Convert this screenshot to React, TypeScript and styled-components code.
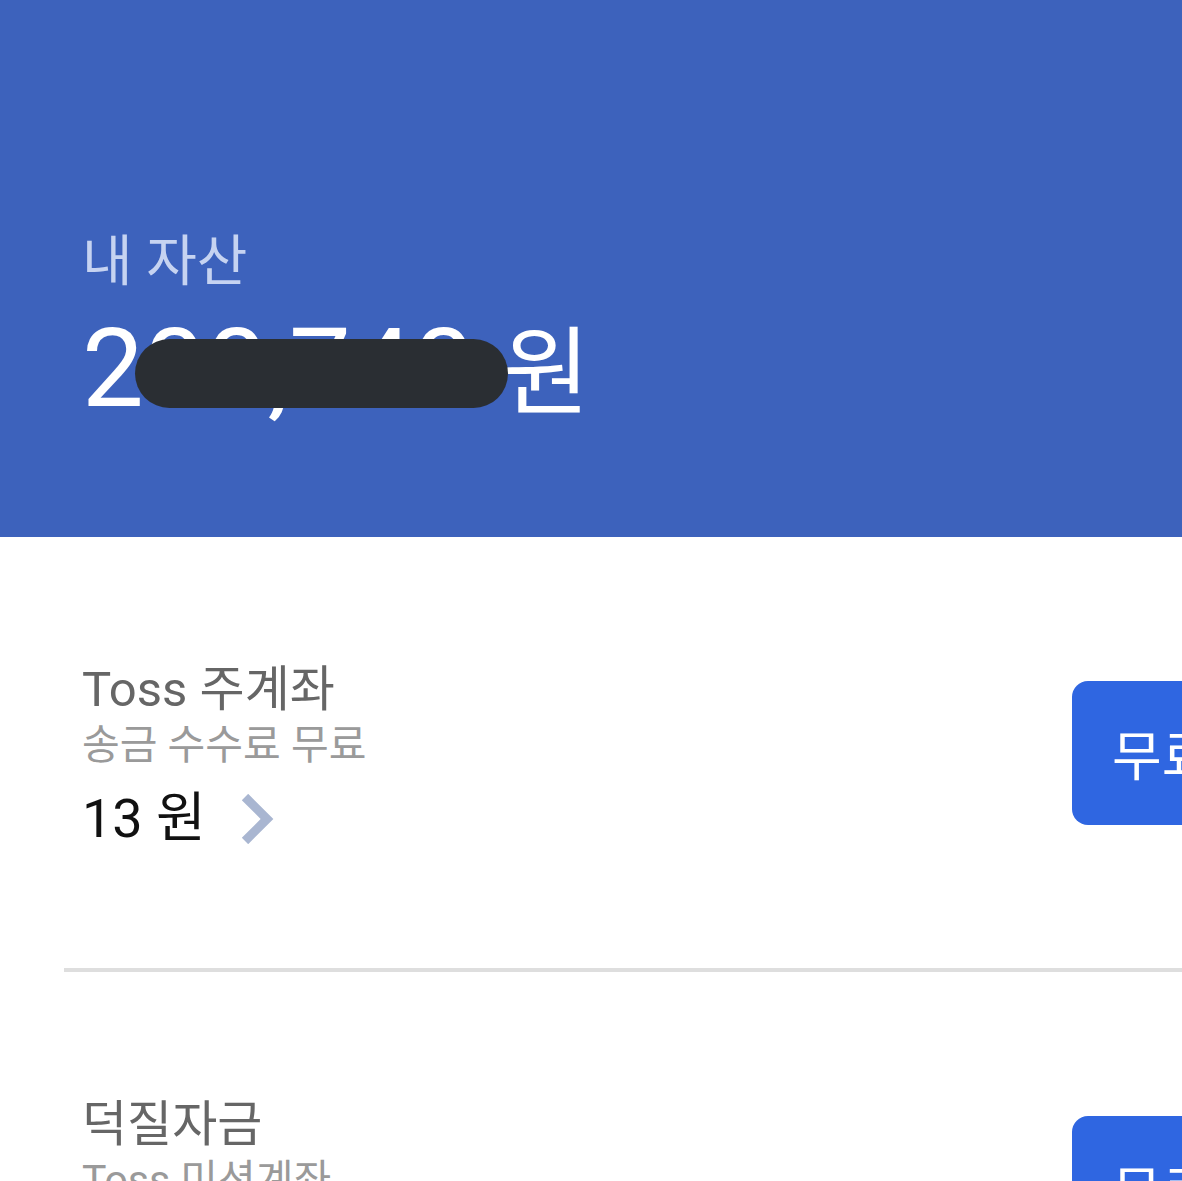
import styled, { createGlobalStyle } from 'styled-components';

const GlobalStyle = createGlobalStyle`
  html, body {
    margin: 0;
    padding: 0;
    background: #ffffff;
    overflow: hidden;
  }
  body {
    font-family: Roboto, 'Noto Sans CJK KR', sans-serif;
  }
`;

interface Account {
  title: string;
  desc: string;
  amount: string;
  action: string;
}

const accounts: Account[] = [
  { title: 'Toss 주계좌', desc: '송금 수수료 무료', amount: '13 원', action: '무료송금' },
  { title: '덕질자금', desc: 'Toss 미션계좌', amount: '0 원', action: '무료송금' },
];

const Chevron = () => (
  <svg width="34" height="50" viewBox="0 0 34 50" fill="none">
    <path d="M5 3 L27 25 L5 47" stroke="#a9b6d1" strokeWidth="9" />
  </svg>
);

export default function App() {
  return (
    <>
      <GlobalStyle />
      <Page>
        <Header>
          <Label>내 자산</Label>
          <Total>
            200,740 <Won>원</Won>
            <Redact />
          </Total>
        </Header>
        <List>
          {accounts.map((acc, i) => (
            <div key={acc.title}>
              {i > 0 && <Divider />}
              <Row>
                <Info>
                  <Title>{acc.title}</Title>
                  <Desc>{acc.desc}</Desc>
                  <Amount>
                    <span>{acc.amount}</span>
                    <Chevron />
                  </Amount>
                </Info>
                <ActionBtn>{acc.action}</ActionBtn>
              </Row>
            </div>
          ))}
        </List>
      </Page>
    </>
  );
}

const Page = styled.div`
  width: 1182px;
  height: 1181px;
  overflow: hidden;
`;

const Header = styled.div`
  height: 537px;
  box-sizing: border-box;
  padding: 0 0 104px 82px;
  background: #3d62bc;

  display: flex;
  flex-direction: column;
  justify-content: flex-end;
`;

const Label = styled.div`
  color: #c6d3f1;
  font-size: 55px;
  line-height: 64px;
  margin-bottom: 16px;
`;

const Total = styled.div`
  position: relative;
  align-self: flex-start;
  color: #ffffff;
  font-size: 110px;
  line-height: 120px;
  white-space: nowrap;
`;

const Won = styled.span`
  font-size: 96px;
`;

const Redact = styled.div`
  position: absolute;
  left: 53px;
  top: 30px;
  width: 373px;
  height: 69px;
  border-radius: 35px;
  background: #2a2e33;
`;

const List = styled.div`
  width: 1360px;
`;

const Row = styled.div`
  height: 431px;
  padding-left: 82px;
  box-sizing: border-box;

  display: flex;
  align-items: center;
`;

const Info = styled.div`
  flex: 1;
  display: flex;
  flex-direction: column;
  padding-top: 8px;
`;

const Title = styled.div`
  color: #666666;
  font-size: 49px;
  line-height: 56px;
`;

const Desc = styled.div`
  color: #9a9a9a;
  font-size: 41px;
  line-height: 54px;
`;

const Amount = styled.div`
  margin-top: 14px;
  display: flex;
  align-items: center;
  gap: 34px;

  span {
    color: #111111;
    font-size: 54px;
    line-height: 66px;
  }
`;

const ActionBtn = styled.div`
  width: 288px;
  height: 144px;
  flex-shrink: 0;
  box-sizing: border-box;
  padding-left: 40px;

  display: flex;
  align-items: center;

  border-radius: 16px;
  background: #2f66e1;
  color: #ffffff;
  font-size: 54px;
`;

const Divider = styled.div`
  margin-left: 64px;
  height: 4px;
  background: #dedede;
`;
